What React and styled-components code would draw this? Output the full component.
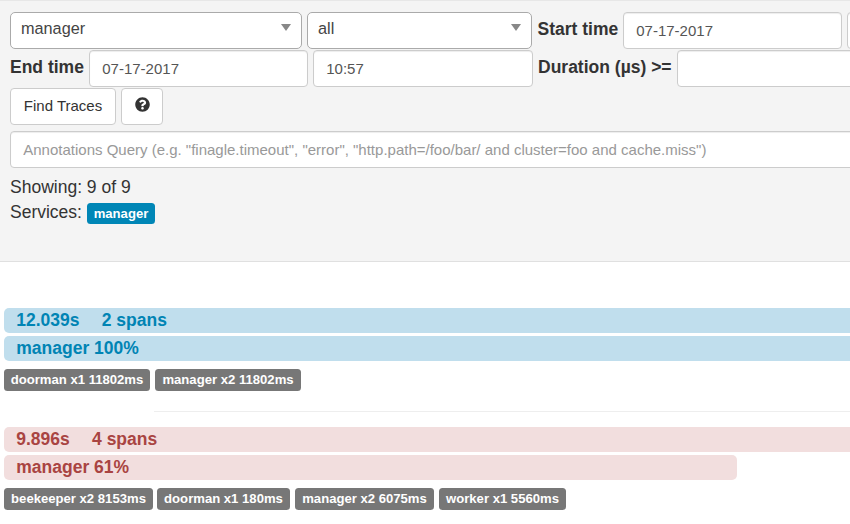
import React from 'react';
import styled, { createGlobalStyle } from 'styled-components';
import { FaQuestionCircle } from 'react-icons/fa';

const GlobalStyle = createGlobalStyle`
  *, *::before, *::after { box-sizing: border-box; }
  html, body { margin: 0; overflow: hidden; background: #fff; }
  body {
    font-family: "Liberation Sans", Arial, sans-serif;
    font-size: 17.5px;
    line-height: 25px;
    color: #333;
  }
`;

const Page = styled.div`
  width: 850px;
  height: 524px;
  overflow: hidden;
`;

const SearchPanel = styled.form`
  height: 262px;
  padding: 11px 0 0 10px;
  background: #f4f4f4;
  border-top: 1px solid #e7e7e7;
  border-bottom: 1px solid #e0e0e0;
  overflow: hidden;
`;

const Row = styled.div`
  display: flex;
  width: max-content;
  height: 37px;
  margin-bottom: ${(p) => p.$gap ?? 1}px;
`;

const Select = styled.div`
  display: flex;
  justify-content: space-between;
  flex: none;
  width: ${(p) => p.$width}px;
  margin-right: 5px;
  padding: 2px 10px 0;
  font-size: 16.25px;
  line-height: 26px;
  color: #444;
  background: #fff;
  border: 1px solid #aaa;
  border-radius: 5px;
`;

const Caret = styled.span`
  width: 0;
  height: 0;
  margin-top: 9px;
  border: solid transparent;
  border-width: 7px 5px 0;
  border-top-color: #888;
`;

const Label = styled.label`
  flex: none;
  width: ${(p) => p.$width}px;
  padding: 5px 0 0 ${(p) => p.$inset ?? 0}px;
  font-weight: bold;
  white-space: nowrap;
`;

const Input = styled.input`
  flex: none;
  width: ${(p) => p.$width}px;
  height: 37px;
  margin: 0 5px 0 0;
  padding: 0 12.25px 1px;
  font: 15px "Liberation Sans", Arial, sans-serif;
  color: #555;
  background: #fff;
  border: 1px solid #ccc;
  border-radius: 4px;
  box-shadow: inset 0 1px 1px rgba(0, 0, 0, 0.075);
  outline: none;
  &::placeholder { color: #999; opacity: 1; }
`;

const Button = styled.button`
  display: flex;
  align-items: center;
  justify-content: center;
  width: ${(p) => p.$width}px;
  height: 37px;
  margin: 0 5px 0 0;
  padding: 0 0 2px;
  font: 15px "Liberation Sans", Arial, sans-serif;
  color: #333;
  background: #fff;
  border: 1px solid #ccc;
  border-radius: 4px;
  svg { margin-bottom: 2px; }
`;

const Summary = styled.div`
  margin-top: 7px;
`;

const Tag = styled.span`
  display: inline-block;
  flex: none;
  width: ${(p) => p.$width}px;
  height: ${(p) => (p.$primary ? 21 : 22)}px;
  font-size: 13.125px;
  font-weight: bold;
  line-height: 21px;
  text-align: center;
  white-space: nowrap;
  color: #fff;
  background: ${(p) => (p.$primary ? '#0086b6' : '#777')};
  border-radius: 3.5px;
`;

const ServiceLine = styled.div`
  display: flex;
  gap: 5px;
  ${Tag} { margin-top: 3px; }
`;

const TraceList = styled.main`
  padding: 46px 0 0 4px;
`;

const Trace = styled.section`
  color: ${(p) => (p.$tone === 'error' ? '#a94442' : '#0084b4')};
`;

const Bar = styled.div`
  display: flex;
  gap: 22.25px;
  width: ${(p) => p.$width}px;
  height: 25px;
  margin-bottom: 3px;
  padding-left: 12.25px;
  font-weight: bold;
  background: ${(p) => (p.$tone === 'error' ? '#f2dede' : '#c0deed')};
  border-radius: 5px;
`;

const Tags = styled.div`
  display: flex;
  padding-top: 5px;
`;

const TraceTag = styled(Tag)`
  margin-right: ${(p) => p.$after ?? 5}px;
`;

const Divider = styled.hr`
  height: 1px;
  margin: 20px 0 15px 150px;
  border: 0;
  background: #eee;
`;

const traces = [
  {
    tone: 'info', duration: '12.039s', spans: '2 spans', share: 'manager 100%', width: 900,
    tags: [['doorman x1 11802ms', 146], ['manager x2 11802ms', 146]],
  },
  {
    tone: 'error', duration: '9.896s', spans: '4 spans', share: 'manager 61%', width: 733,
    tags: [['beekeeper x2 8153ms', 149, 4], ['doorman x1 180ms', 133], ['manager x2 6075ms', 139], ['worker x1 5560ms', 127]],
  },
];

export default function App() {
  return (
    <Page>
      <GlobalStyle />
      <SearchPanel>
        <Row>
          <Select $width={292}>manager<Caret /></Select>
          <Select $width={225}>all<Caret /></Select>
          <Label $width={86} $inset={0.5}>Start time</Label>
          <Input $width={219} defaultValue="07-17-2017" />
          <Input $width={219} />
        </Row>
        <Row>
          <Label $width={79}>End time</Label>
          <Input $width={219} defaultValue="07-17-2017" />
          <Input $width={220} defaultValue="10:57" />
          <Label $width={139}>Duration (µs) &gt;=</Label>
          <Input $width={219} />
        </Row>
        <Row $gap={6}>
          <Button type="button" $width={106}>Find Traces</Button>
          <Button type="button" $width={42} aria-label="Help"><FaQuestionCircle size={15} /></Button>
        </Row>
        <Row $gap={0}>
          <Input
            $width={900}
            placeholder={'Annotations Query (e.g. "finagle.timeout", "error", "http.path=/foo/bar/ and cluster=foo and cache.miss")'}
          />
        </Row>
        <Summary>
          <div>Showing: 9 of 9</div>
          <ServiceLine>Services: <Tag $primary $width={68}>manager</Tag></ServiceLine>
        </Summary>
      </SearchPanel>
      <TraceList>
        {traces.map((t, i) => (
          <React.Fragment key={t.duration}>
            {i > 0 && <Divider />}
            <Trace $tone={t.tone}>
              <Bar $tone={t.tone} $width={900}><span>{t.duration}</span><span>{t.spans}</span></Bar>
              <Bar $tone={t.tone} $width={t.width}>{t.share}</Bar>
              <Tags>
                {t.tags.map(([text, width, after]) => (
                  <TraceTag key={text} $width={width} $after={after}>{text}</TraceTag>
                ))}
              </Tags>
            </Trace>
          </React.Fragment>
        ))}
      </TraceList>
    </Page>
  );
}
